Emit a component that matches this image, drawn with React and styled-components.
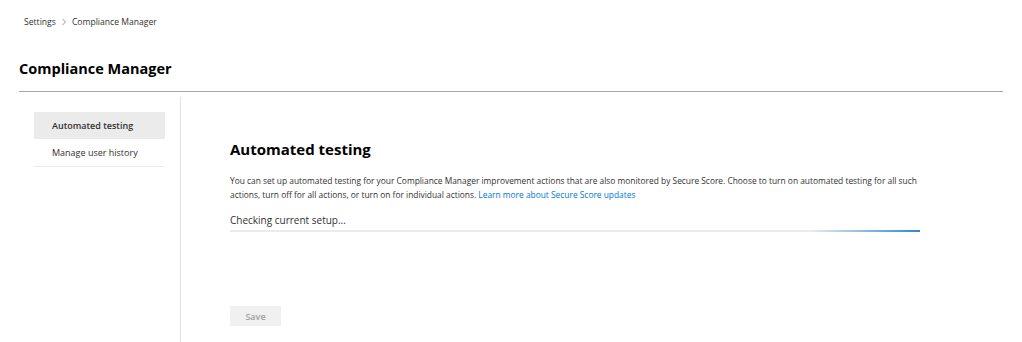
import React from 'react'
import styled, { createGlobalStyle } from 'styled-components'

const GlobalStyle = createGlobalStyle`
    body {
        margin: 0;
        background: white;
        font-family: "Open Sans", "Noto Sans", sans-serif;
        color: #323130;
    }
`

function App() {
    return (
        <Page>
            <GlobalStyle />
            <Breadcrumb>
                <Crumb>Settings</Crumb>
                <Chevron>
                    <svg width="6" height="8" viewBox="0 0 6 8">
                        <path d="M1.5 1 L4.5 4 L1.5 7" fill="none" stroke="#8a8886" strokeWidth="0.9" />
                    </svg>
                </Chevron>
                <Crumb>Compliance Manager</Crumb>
            </Breadcrumb>
            <PageTitle>Compliance Manager</PageTitle>
            <Body>
                <Nav>
                    <NavItem active>Automated testing</NavItem>
                    <NavItem>Manage user history</NavItem>
                </Nav>
                <Content>
                    <Heading>Automated testing</Heading>
                    <Description>
                        You can set up automated testing for your Compliance Manager improvement actions that are also monitored by Secure Score. Choose to turn on automated testing for all such actions, turn off for all actions, or turn on for individual actions. <Link>Learn more about Secure Score updates</Link>
                    </Description>
                    <Status>Checking current setup...</Status>
                    <Track>
                        <Bar />
                    </Track>
                    <Footer>
                        <SaveButton disabled>Save</SaveButton>
                    </Footer>
                </Content>
            </Body>
        </Page>
    )
}

export default App

const Page = styled.div`
    padding: 0 19px;
    height: 342px;
    display: flex;
    flex-direction: column;
    box-sizing: border-box;
    overflow: hidden;
`

const Breadcrumb = styled.div`
    display: flex;
    align-items: center;
    gap: 5px;
    padding-left: 5px;
    height: 14px;
    margin-top: 15px;
    font-size: 8.6px;
    color: #323130;
`

const Crumb = styled.span``

const Chevron = styled.span`
    display: flex;
    align-items: center;
`

const PageTitle = styled.div`
    margin-top: 29px;
    font-size: 14.5px;
    font-weight: 700;
    line-height: 22px;
    color: #000;
    padding-bottom: 11px;
    border-bottom: 1px solid #a8a8a8;
`

const Body = styled.div`
    flex: 1;
    display: flex;
    padding-top: 5px;
`

const Nav = styled.div`
    width: 162px;
    box-sizing: border-box;
    padding: 15px 15px 0;
    border-right: 1px solid #e1e1e1;
`

const NavItem = styled.div`
    height: 27px;
    display: flex;
    align-items: center;
    padding-left: 18px;
    font-size: 9px;
    font-weight: ${p => (p.active ? 600 : 400)};
    color: #323130;
    background: ${p => (p.active ? '#ebebeb' : 'transparent')};
    border-bottom: ${p => (p.active ? 'none' : '1px solid #ebebeb')};
`

const Content = styled.div`
    flex: 1;
    padding-left: 49px;
    padding-top: 41px;
    max-width: 690px;
    display: flex;
    flex-direction: column;
`

const Heading = styled.div`
    font-size: 15px;
    font-weight: 700;
    line-height: 22px;
    color: #000;
`

const Description = styled.p`
    margin: 14px 0 0;
    font-size: 8.4px;
    line-height: 14px;
    color: #323130;
`

const Link = styled.a`
    color: #0078d4;
    cursor: pointer;
`

const Status = styled.div`
    margin-top: 11px;
    font-size: 10px;
    line-height: 14px;
    color: #323130;
`

const Track = styled.div`
    margin-top: 3px;
    height: 2px;
    background: #edebe9;
    position: relative;
    overflow: hidden;
`

const Bar = styled.div`
    position: absolute;
    right: 0;
    top: 0;
    height: 100%;
    width: 110px;
    background: linear-gradient(to right, rgba(0, 120, 212, 0), #4a9fe0 80%, #2b88d8);
`

const Footer = styled.div`
    margin-top: 74px;
    display: flex;
`

const SaveButton = styled.button`
    width: 51px;
    height: 20px;
    box-sizing: border-box;
    border: none;
    background: #f0f0f0;
    color: #a19f9d;
    font-family: inherit;
    font-size: 9px;
    font-weight: 600;
    padding: 0;
`
